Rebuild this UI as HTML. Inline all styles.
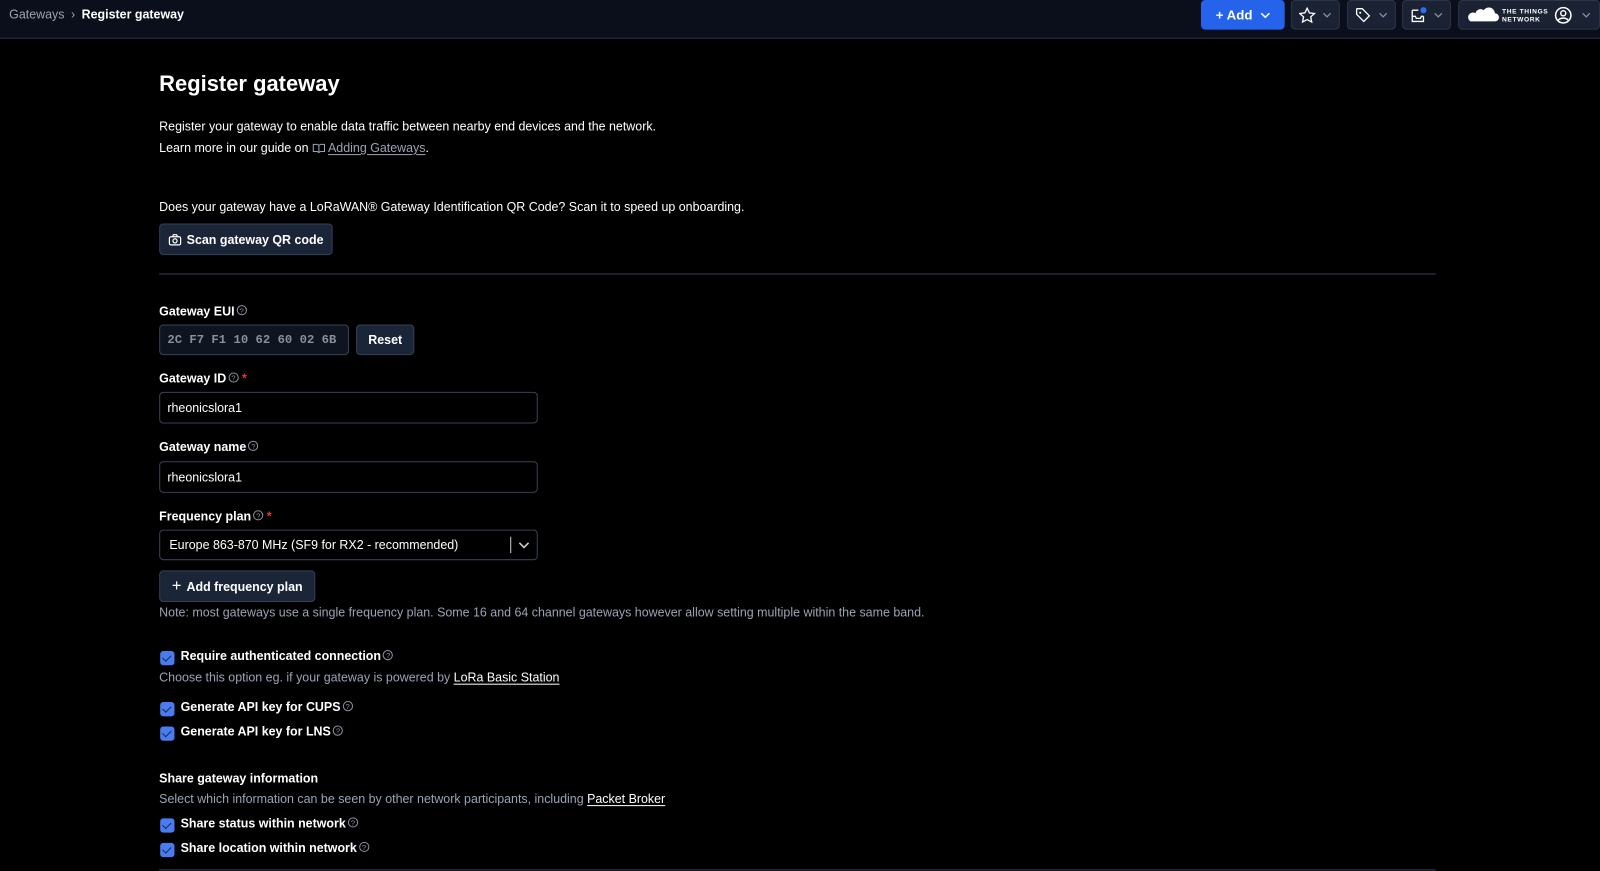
<!DOCTYPE html>
<html><head><meta charset="utf-8"><style>
*{box-sizing:border-box;margin:0;padding:0}
html,body{width:1600px;height:871px;background:#000;overflow:hidden}
#w{position:absolute;left:0;top:0;width:1568px;height:854px;transform:scale(1.0204);transform-origin:0 0;color:#fff;font-family:"Liberation Sans",sans-serif;font-size:12.2px}
.a{position:absolute;white-space:nowrap}
.hdr{position:absolute;left:0;top:0;width:1568px;height:38px;background:#0a0f1b;border-bottom:1px solid #262c3d}
.hb{position:absolute;top:0;height:29px;background:#1a2233;border:1px solid #2c3447;border-radius:4px}
.b{font-weight:bold}
.muted{color:#9aa3b5}
.btn{position:absolute;background:#1b2538;border:1px solid #34405a;border-radius:4px;font-weight:bold;color:#fff;display:flex;align-items:center;justify-content:center;gap:5px;font-size:12.2px}
.inp{position:absolute;border:1px solid #3a4255;border-radius:4px;background:#000;padding-left:7px;display:flex;align-items:center}
.q{display:inline-block;width:10px;height:10px;border:1px solid #8a92a3;border-radius:50%;font-size:7.5px;line-height:9px;text-align:center;color:#8a92a3;font-weight:normal;vertical-align:2px;margin-left:2px}
.cb{position:absolute;width:14px;height:14px;background:#4a7cf0;border-radius:3px}
.cb:after{content:"";position:absolute;left:4px;top:2px;width:4px;height:7px;border:solid #1a2a50;border-width:0 1.5px 1.5px 0;transform:rotate(45deg)}
.star{color:#e53535}
u{text-underline-offset:2px}
</style></head><body><div id="w">
<div class="hdr"></div>
<div class="a muted" style="left:9px;top:7px">Gateways <span style="margin:0 3px">›</span> <span class="b" style="color:#fff">Register gateway</span></div>
<div class="hb" style="left:1177px;width:82px;background:#2563eb;border-color:#2563eb;color:#fff;font-weight:bold;display:flex;align-items:center;justify-content:center;font-size:13px">+ Add &nbsp;<svg width="10" height="6"><path d="M1 1l4 4 4-4" stroke="#fff" fill="none" stroke-width="1.5"/></svg></div>
<div class="hb" style="left:1265px;width:48px"><svg class="a" style="left:7px;top:6px" width="32" height="16"><path d="M8 1l2.2 4.6 5 .6-3.7 3.4 1 5L8 12.2 3.5 14.6l1-5L.8 6.2l5-.6z" stroke="#fff" fill="none" stroke-width="1.3"/><path d="M24 6l3.5 3.5L31 6" stroke="#8a92a3" fill="none" stroke-width="1.2"/></svg></div>
<div class="hb" style="left:1320px;width:48px"><svg class="a" style="left:7px;top:6px" width="32" height="16"><path d="M1.5 2v5l7 7 5.5-5.5-7-7h-5z" stroke="#fff" fill="none" stroke-width="1.3"/><circle cx="5" cy="5.5" r="1" fill="#fff"/><path d="M24 6l3.5 3.5L31 6" stroke="#8a92a3" fill="none" stroke-width="1.2"/></svg></div>
<div class="hb" style="left:1374px;width:48px"><svg class="a" style="left:8px;top:6px" width="32" height="16"><path d="M1 3h6M1 3v11h11V9M1 9h3l1 2h4l1-2h2" stroke="#fff" fill="none" stroke-width="1.3"/><circle cx="12" cy="3" r="3" fill="#2f6df6"/><path d="M23 6l3.5 3.5L30 6" stroke="#8a92a3" fill="none" stroke-width="1.2"/></svg></div>
<div class="hb" style="left:1429px;width:139px"><svg class="a" style="left:8px;top:4px" width="32" height="18"><path d="M3 16h24a4 4 0 0 0 0-8 6 6 0 0 0-11-3 5 5 0 0 0-8 3 4 4 0 0 0-5 8z" fill="#fff"/></svg><div class="a b" style="left:42px;top:7px;font-size:6.5px;line-height:7.5px;letter-spacing:.6px">THE THINGS<br>NETWORK</div><svg class="a" style="left:93px;top:5px" width="44" height="18"><circle cx="9" cy="9" r="7.5" stroke="#fff" fill="none" stroke-width="1.5"/><circle cx="9" cy="7" r="2.5" stroke="#fff" fill="none" stroke-width="1.4"/><path d="M4 14c2-3 8-3 10 0" stroke="#fff" fill="none" stroke-width="1.4"/><path d="M28 7l3.5 3.5L35 7" stroke="#8a92a3" fill="none" stroke-width="1.2"/></svg></div>

<div class="a b" style="left:156px;top:70px;font-size:21.5px">Register gateway</div>
<div class="a" style="left:156px;top:117px">Register your gateway to enable data traffic between nearby end devices and the network.</div>
<div class="a" style="left:156px;top:138px">Learn more in our guide on <svg width="13" height="10" style="vertical-align:-1px"><path d="M1 1.5h4l1.5 1v7L5 8.5H1zM12 1.5H8l-1.5 1v7L8 8.5h4z" stroke="#9aa3b5" fill="none" stroke-width="1"/></svg> <u class="muted">Adding Gateways</u>.</div>
<div class="a" style="left:156px;top:196px">Does your gateway have a LoRaWAN® Gateway Identification QR Code? Scan it to speed up onboarding.</div>
<div class="btn" style="left:156px;top:219px;width:170px;height:31px"><svg width="13" height="12"><rect x="1" y="3" width="11" height="8" rx="1.5" stroke="#fff" fill="none" stroke-width="1.2"/><path d="M4 3l1-2h3l1 2" stroke="#fff" fill="none" stroke-width="1.2"/><circle cx="6.5" cy="7" r="2" stroke="#fff" fill="none" stroke-width="1.2"/></svg>Scan gateway QR code</div>
<div class="a" style="left:156px;top:268px;width:1251px;height:1px;background:#3a4255"></div>

<div class="a b" style="left:156px;top:298px">Gateway EUI<span class="q">?</span></div>
<div class="inp" style="left:156px;top:318px;width:186px;height:30px;background:#0f1520;color:#8b8f98;font-family:'Liberation Mono',monospace;font-weight:bold;font-size:12px">2C F7 F1 10 62 60 02 6B</div>
<div class="btn" style="left:349px;top:318px;width:57px;height:30px">Reset</div>

<div class="a b" style="left:156px;top:364px">Gateway ID<span class="q">?</span> <span class="star">*</span></div>
<div class="inp" style="left:156px;top:384px;width:371px;height:31px">rheonicslora1</div>
<div class="a b" style="left:156px;top:431px">Gateway name<span class="q">?</span></div>
<div class="inp" style="left:156px;top:452px;width:371px;height:31px">rheonicslora1</div>
<div class="a b" style="left:156px;top:499px">Frequency plan<span class="q">?</span> <span class="star">*</span></div>
<div class="inp" style="left:156px;top:519px;width:371px;height:30px;padding-left:9px">Europe 863-870 MHz (SF9 for RX2 - recommended)</div>
<div class="a" style="left:500px;top:526px;width:1px;height:16px;background:#ccc"></div>
<svg class="a" style="left:508px;top:531px" width="11" height="7"><path d="M1 1l4.5 4.5L10 1" stroke="#ccc" fill="none" stroke-width="1.6"/></svg>
<div class="btn" style="left:156px;top:559px;width:153px;height:31px"><span style="font-weight:normal;font-size:16px">+</span>Add frequency plan</div>
<div class="a muted" style="left:156px;top:593px">Note: most gateways use a single frequency plan. Some 16 and 64 channel gateways however allow setting multiple within the same band.</div>

<div class="cb" style="left:157px;top:638px"></div><div class="a b" style="left:177px;top:636px">Require authenticated connection<span class="q">?</span></div>
<div class="a muted" style="left:156px;top:657px">Choose this option eg. if your gateway is powered by <u style="color:#fff">LoRa Basic Station</u></div>
<div class="cb" style="left:157px;top:688px"></div><div class="a b" style="left:177px;top:686px">Generate API key for CUPS<span class="q">?</span></div>
<div class="cb" style="left:157px;top:712px"></div><div class="a b" style="left:177px;top:710px">Generate API key for LNS<span class="q">?</span></div>

<div class="a b" style="left:156px;top:756px">Share gateway information</div>
<div class="a muted" style="left:156px;top:776px">Select which information can be seen by other network participants, including <u style="color:#fff">Packet Broker</u></div>
<div class="cb" style="left:157px;top:802px"></div><div class="a b" style="left:177px;top:800px">Share status within network<span class="q">?</span></div>
<div class="cb" style="left:157px;top:826px"></div><div class="a b" style="left:177px;top:824px">Share location within network<span class="q">?</span></div>
<div class="a" style="left:156px;top:852px;width:1251px;height:1px;background:#3a4255"></div>
</div></body></html>
